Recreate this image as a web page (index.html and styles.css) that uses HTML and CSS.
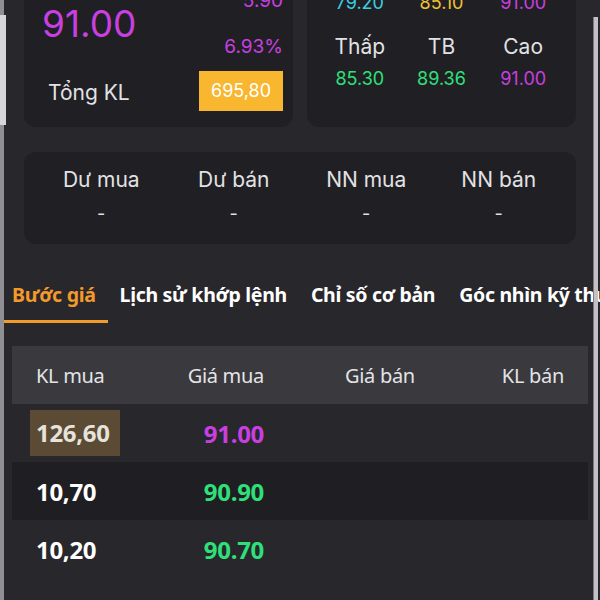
FILE: index.html
```html
<!DOCTYPE html>
<html lang="vi">
<head>
	<meta charset="UTF-8">
	<title>Bước giá</title>
	<link rel="stylesheet" href="styles.css">
</head>
<body>
	<div class="rail-left"><div class="rail-thumb"></div></div>
	<div class="rail-right"></div>

	<div id="wrapper">
		<!-- Quote summary -->
		<div class="summary">
			<div class="top-row">
				<div class="card quote">
					<div class="quote-head">
						<div class="price ceil">91.00</div>
						<div class="change">
							<div class="chg ceil">5.90</div>
							<div class="pct ceil">6.93%</div>
						</div>
					</div>
					<div class="quote-foot">
						<span class="vol-label">Tổng KL</span>
						<span class="vol-box">695,80</span>
					</div>
				</div>
				<div class="card range">
					<div class="cell"><span class="lbl">Sàn</span><span class="val floor">79.20</span></div>
					<div class="cell"><span class="lbl">TC</span><span class="val ref">85.10</span></div>
					<div class="cell"><span class="lbl">Trần</span><span class="val ceil">91.00</span></div>
					<div class="cell"><span class="lbl">Thấp</span><span class="val up">85.30</span></div>
					<div class="cell"><span class="lbl">TB</span><span class="val up">89.36</span></div>
					<div class="cell"><span class="lbl">Cao</span><span class="val ceil">91.00</span></div>
				</div>
			</div>

			<div class="card stats">
				<div class="cell"><span class="lbl">Dư mua</span><span class="val">-</span></div>
				<div class="cell"><span class="lbl">Dư bán</span><span class="val">-</span></div>
				<div class="cell"><span class="lbl">NN mua</span><span class="val">-</span></div>
				<div class="cell"><span class="lbl">NN bán</span><span class="val">-</span></div>
			</div>
		</div>

		<!-- Tabs -->
		<div class="tabs">
			<div class="tab active">Bước giá</div>
			<div class="tab">Lịch sử khớp lệnh</div>
			<div class="tab">Chỉ số cơ bản</div>
			<div class="tab">Góc nhìn kỹ thuật</div>
		</div>

		<!-- Order book -->
		<div class="book">
			<div class="book-row book-head">
				<span class="c1">KL mua</span>
				<span class="c2">Giá mua</span>
				<span class="c3">Giá bán</span>
				<span class="c4">KL bán</span>
			</div>
			<div class="book-row">
				<span class="c1"><span class="hl">126,60</span></span>
				<span class="c2 ceil">91.00</span>
				<span class="c3"></span>
				<span class="c4"></span>
			</div>
			<div class="book-row alt">
				<span class="c1">10,70</span>
				<span class="c2 up">90.90</span>
				<span class="c3"></span>
				<span class="c4"></span>
			</div>
			<div class="book-row">
				<span class="c1">10,20</span>
				<span class="c2 up">90.70</span>
				<span class="c3"></span>
				<span class="c4"></span>
			</div>
		</div>
	</div>
</body>
</html>
```

FILE: styles.css
```css
body {
	margin: 0;
	background-color: #28272c;
	font-family: Inter, "Noto Sans", sans-serif;
	color: #e2e2e4;
	overflow: hidden;
	height: 600px;
}
#wrapper {
	width: 600px;
	overflow: hidden;
}

/* colours */
.ceil { color: #c840e0; }
.floor { color: #3ccfe2; }
.ref { color: #f0c232; }
.up { color: #2fe07a; }

/* scroll indicators */
.rail-left {
	position: absolute;
	left: 0;
	top: 0;
	width: 4px;
	height: 600px;
	background-color: #8f8f95;
	z-index: 5;
}
.rail-thumb {
	margin-top: 15px;
	height: 110px;
	width: 6px;
	background-color: #d6d6d9;
}
.rail-right {
	position: absolute;
	right: 2px;
	top: 17px;
	width: 4px;
	height: 583px;
	background-color: #c2c2c6;
	border-left: 1px solid #7c7c82;
	z-index: 5;
}

/* summary cards */
.summary {
	padding: 0 24px;
}
.top-row {
	display: flex;
	gap: 14px;
	margin-top: -57px;
}
.card {
	background-color: #201f23;
	border-radius: 12px;
}
.quote {
	width: 269px;
	box-sizing: border-box;
	padding: 14px 10px 16px 18px;
}
.quote-head {
	display: flex;
	justify-content: space-between;
}
.price {
	font-size: 37px;
	line-height: 44px;
	margin-top: 45px;
}
.change {
	margin-top: 30px;
	text-align: right;
	font-size: 19px;
}
.chg {
	line-height: 28px;
}
.pct {
	line-height: 28px;
	margin-top: 18px;
}
.quote-foot {
	display: flex;
	justify-content: space-between;
	align-items: center;
	margin-top: 10px;
}
.vol-label {
	font-size: 21px;
	margin-left: 6px;
	margin-top: 2px;
}
.vol-box {
	background-color: #f9b62f;
	color: #fff;
	font-size: 18px;
	width: 84px;
	height: 40px;
	line-height: 40px;
	text-align: center;
}
.range {
	flex: 1;
	display: grid;
	grid-template-columns: repeat(3, 1fr);
	row-gap: 16px;
	padding: 14px 12px 0;
	align-content: start;
}
.cell {
	display: flex;
	flex-direction: column;
	align-items: center;
}
.lbl {
	font-size: 21px;
	line-height: 28px;
}
.range .val {
	font-size: 18px;
	line-height: 28px;
	margin-top: 4px;
}
.stats {
	margin-top: 25px;
	display: grid;
	grid-template-columns: repeat(4, 1fr);
	padding: 14px 11px 16px;
}
.stats .val {
	font-size: 18px;
	line-height: 28px;
	margin-top: 6px;
}

/* tabs */
.tabs {
	display: flex;
	margin-top: 24px;
	white-space: nowrap;
	overflow: hidden;
	font-family: "Noto Sans", sans-serif;
	font-weight: 700;
	font-size: 19.5px;
	letter-spacing: -0.3px;
	color: #fff;
}
.tab {
	padding: 13px 12px 11px;
	line-height: 28px;
	border-bottom: 3px solid transparent;
	flex-shrink: 0;
}
.tab.active {
	color: #f39a2a;
	border-bottom-color: #f39a2a;
}

/* order book */
.book {
	margin: 23px 12px 0;
	font-family: "Noto Sans", sans-serif;
}
.book-row {
	display: grid;
	grid-template-columns: 144px 144px 144px 144px;
	align-items: center;
	height: 58px;
	font-size: 24px;
	font-weight: 700;
	color: #fff;
	letter-spacing: -0.3px;
}
.book-row.alt {
	background-color: #1f1e22;
}
.book-head {
	background-color: #39393e;
	font-weight: 400;
	font-size: 20px;
	color: #e4e4e6;
}
.c1 {
	padding-left: 24px;
}
.c2 {
	text-align: right;
	padding-right: 36px;
}
.c3 {
	padding-left: 45px;
}
.c4 {
	text-align: right;
	padding-right: 24px;
}
.book-row .hl {
	display: inline-block;
	margin-left: -6px;
	padding: 0 10px 0 6px;
	height: 46px;
	line-height: 46px;
	background-color: #5b4a34;
	color: #e6e2dc;
}
```
